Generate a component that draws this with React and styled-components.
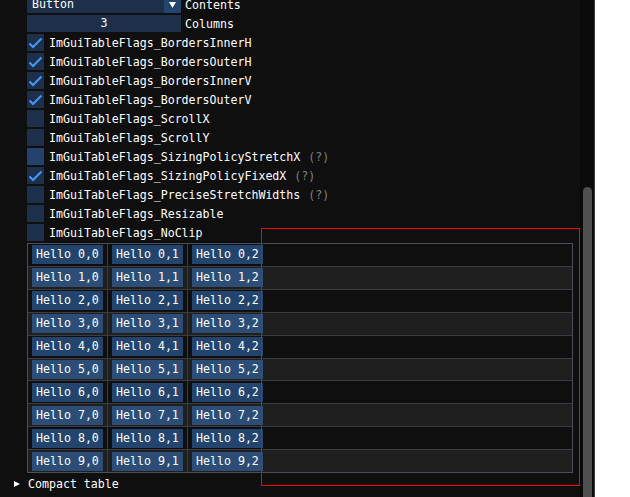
import styled, { createGlobalStyle } from "styled-components"

const GlobalStyle = createGlobalStyle`
    html, body {
        margin: 0;
        padding: 0;
        background: #ffffff;
    }
    body {
        font-family: "DejaVu Sans Mono", "Liberation Mono", monospace;
        font-size: 11.6px;
        color: #ffffff;
    }
`;

const flags = [
    { name: "ImGuiTableFlags_BordersInnerH", on: true },
    { name: "ImGuiTableFlags_BordersOuterH", on: true },
    { name: "ImGuiTableFlags_BordersInnerV", on: true },
    { name: "ImGuiTableFlags_BordersOuterV", on: true },
    { name: "ImGuiTableFlags_ScrollX" },
    { name: "ImGuiTableFlags_ScrollY" },
    { name: "ImGuiTableFlags_SizingPolicyStretchX", help: true, hover: true },
    { name: "ImGuiTableFlags_SizingPolicyFixedX", on: true, help: true },
    { name: "ImGuiTableFlags_PreciseStretchWidths", help: true },
    { name: "ImGuiTableFlags_Resizable" },
    { name: "ImGuiTableFlags_NoClip" },
];

const rows = [0, 1, 2, 3, 4, 5, 6, 7, 8, 9];

const CheckMark = () => (
    <svg width="17" height="17" viewBox="0 0 17 17">
        <polyline points="2.5,9.5 6,13 14.5,4.5" fill="none" stroke="#4296fa" strokeWidth="2.2" />
    </svg>
);

const App = () => {
    return (
        <Window>
            <GlobalStyle />
            <Main>
                <Content>
                    <Line>
                        <Combo>
                            <ComboText>Button</ComboText>
                            <ComboArrow>
                                <svg width="7" height="6" viewBox="0 0 7 6">
                                    <polygon points="0,0 7,0 3.5,6" fill="#ffffff" />
                                </svg>
                            </ComboArrow>
                        </Combo>
                        <Label>Contents</Label>
                    </Line>
                    <Line>
                        <Drag>3</Drag>
                        <Label>Columns</Label>
                    </Line>
                    {flags.map((f) => (
                        <Line key={f.name}>
                            <CheckBox $hover={f.hover}>{f.on && <CheckMark />}</CheckBox>
                            <CheckLabel>{f.name}</CheckLabel>
                            {f.help && <Help>(?)</Help>}
                        </Line>
                    ))}
                    <Table>
                        {rows.map((r) => (
                            <Row key={r} $alt={r % 2 === 1}>
                                {[0, 1, 2].map((c) => (
                                    <Cell key={c} $first={c === 0}>
                                        <CellButton>Hello {r},{c}</CellButton>
                                    </Cell>
                                ))}
                            </Row>
                        ))}
                    </Table>
                    <TreeNode>
                        <TreeArrow>
                            <svg width="6" height="6" viewBox="0 0 6 6">
                                <polygon points="0,0 6,3 0,6" fill="#ffffff" />
                            </svg>
                        </TreeArrow>
                        Compact table
                    </TreeNode>
                    <TreeNode>
                        <TreeArrow>
                            <svg width="6" height="6" viewBox="0 0 6 6">
                                <polygon points="0,0 6,3 0,6" fill="#ffffff" />
                            </svg>
                        </TreeArrow>
                        Row height
                    </TreeNode>
                </Content>
            </Main>
            <ScrollTrack>
                <ScrollGrab />
            </ScrollTrack>
            <ClipRect />
        </Window>
    )
};

const Window = styled.div`
    position: relative;
    width: 594px;
    height: 497px;
    display: flex;
    background: #0f0f0f;
    border-right: 1px solid #3d3d3d;
    overflow: hidden;
`;

const Main = styled.div`
    flex: 1;
    min-width: 0;
`;

const Content = styled.div`
    margin-top: -4px;
    padding-left: 27px;
    display: flex;
    flex-direction: column;
    gap: 2px;
`;

const Line = styled.div`
    display: flex;
    align-items: center;
    height: 17px;
    white-space: nowrap;
`;

const Combo = styled.div`
    width: 154px;
    height: 17px;
    display: flex;
    background: #1d2f49;
`;

const ComboText = styled.span`
    flex: 1;
    padding-left: 5px;
    line-height: 17px;
`;

const ComboArrow = styled.div`
    width: 17px;
    height: 17px;
    display: flex;
    align-items: center;
    justify-content: center;
    background: #23456d;
`;

const Drag = styled.div`
    width: 154px;
    height: 17px;
    line-height: 17px;
    text-align: center;
    background: #1d2f49;
`;

const Label = styled.span`
    margin-left: 4px;
`;

const CheckBox = styled.div`
    width: 17px;
    height: 17px;
    flex: none;
    background: ${(p) => (p.$hover ? "#25426a" : "#1d2f49")};
    svg { display: block; }
`;

const CheckLabel = styled.span`
    margin-left: 5px;
`;

const Help = styled.span`
    margin-left: 8px;
    color: #808080;
`;

const Table = styled.div`
    margin-top: 0;
    width: 546px;
    height: 230px;
    box-sizing: border-box;
    border: 1px solid #4f4f59;
    display: flex;
    flex-direction: column;
`;

const Row = styled.div`
    flex: 1;
    display: grid;
    grid-template-columns: 79px 80px 1fr;
    background: ${(p) => (p.$alt ? "#1f1f1f" : "transparent")};
    & + & {
        border-top: 1px solid #3b3b40;
    }
`;

const Cell = styled.div`
    display: flex;
    align-items: center;
    padding-left: 4px;
    box-sizing: border-box;
    border-left: ${(p) => (p.$first ? "none" : "1px solid #3b3b40")};
`;

const CellButton = styled.div`
    height: 19px;
    line-height: 19px;
    padding: 0 4px;
    background: rgba(66, 150, 250, 0.4);
    white-space: nowrap;
`;

const TreeNode = styled.div`
    display: flex;
    align-items: center;
    height: 17px;
    margin-left: -13px;
    white-space: nowrap;
`;

const TreeArrow = styled.span`
    width: 14px;
    display: flex;
    align-items: center;
    svg { display: block; }
`;

const ScrollTrack = styled.div`
    width: 14px;
    flex: none;
    background: #0a0a0a;
    padding: 187px 2px 0 3px;
    box-sizing: border-box;
`;

const ScrollGrab = styled.div`
    height: 330px;
    background: #4f4f4f;
    border-radius: 5px;
`;

const ClipRect = styled.div`
    position: absolute;
    left: 261px;
    top: 228px;
    width: 319px;
    height: 258px;
    box-sizing: border-box;
    border: 1px solid #ff0000;
    pointer-events: none;
`;

export default App
